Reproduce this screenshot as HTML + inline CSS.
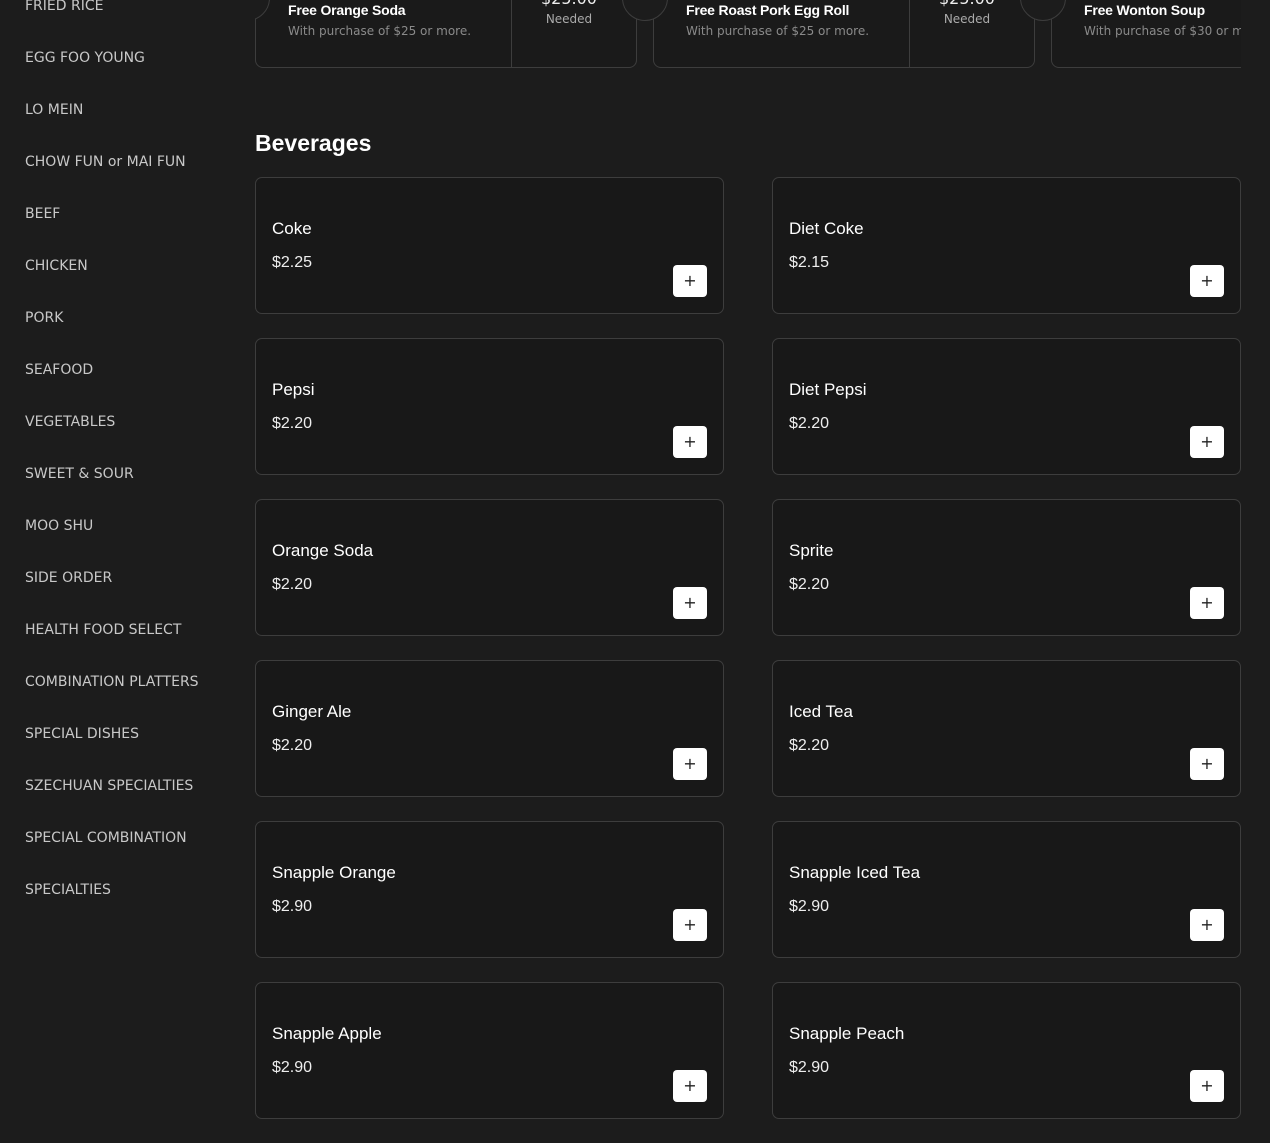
<!DOCTYPE html>
<html><head><meta charset="utf-8"><style>
*{box-sizing:border-box;margin:0;padding:0}
body{width:1270px;height:1143px;overflow:hidden;background:#1c1c1c;font-family:"DejaVu Sans","Liberation Sans",sans-serif;position:relative}
.nav{position:absolute;left:25px;font-size:14px;color:#c8c8c8;letter-spacing:0;line-height:16px}
.cp{position:absolute;top:-30px;height:98px;width:382px;border:1px solid #3d3d3d;border-radius:8px;background:#1a1a1a}
.cp .div{position:absolute;left:255px;top:0;bottom:0;border-left:1px solid #3d3d3d}
.cp .t{position:absolute;left:32px;top:31px;color:#fff;font:bold 14px "Liberation Sans",sans-serif;letter-spacing:-.2px}
.cp .s{position:absolute;left:32px;top:53px;color:#8a8a8a;font-size:12px}
.cp .n{position:absolute;left:250px;width:126px;text-align:center;top:41px;color:#aaa;font-size:12px}
.cp .a{position:absolute;left:250px;width:126px;text-align:center;top:18px;color:#eee;font-size:16px}
.notch{position:absolute;width:46px;height:46px;border-radius:50%;border:1px solid #3d3d3d;background:#1c1c1c;top:-25px}
.clip{position:absolute;left:0;top:0;width:1241px;height:80px;overflow:hidden}
.cover{position:absolute;left:200px;top:0;width:55px;height:80px;background:#1c1c1c}
h2{position:absolute;left:255px;top:130px;color:#fff;font:bold 23px "Liberation Sans",sans-serif}
.card{position:absolute;width:469px;height:137px;border:1px solid #3d3d3d;border-radius:7px;background:#181818}
.card .nm{position:absolute;left:16px;top:41px;color:#fff;font:17px "Liberation Sans",sans-serif}
.card .pr{position:absolute;left:16px;top:76px;color:#eee;font:16px "Liberation Sans",sans-serif}
.card .b{position:absolute;right:16px;top:87px;width:34px;height:32px;background:#fff;border-radius:4px;color:#222;font-size:16px;text-align:center;line-height:31px}
</style></head><body>
<div class="nav" style="top:-2px">FRIED RICE</div>
<div class="nav" style="top:50px">EGG FOO YOUNG</div>
<div class="nav" style="top:102px">LO MEIN</div>
<div class="nav" style="top:154px">CHOW FUN or MAI FUN</div>
<div class="nav" style="top:206px">BEEF</div>
<div class="nav" style="top:258px">CHICKEN</div>
<div class="nav" style="top:310px">PORK</div>
<div class="nav" style="top:362px">SEAFOOD</div>
<div class="nav" style="top:414px">VEGETABLES</div>
<div class="nav" style="top:466px">SWEET &amp; SOUR</div>
<div class="nav" style="top:518px">MOO SHU</div>
<div class="nav" style="top:570px">SIDE ORDER</div>
<div class="nav" style="top:622px">HEALTH FOOD SELECT</div>
<div class="nav" style="top:674px">COMBINATION PLATTERS</div>
<div class="nav" style="top:726px">SPECIAL DISHES</div>
<div class="nav" style="top:778px">SZECHUAN SPECIALTIES</div>
<div class="nav" style="top:830px">SPECIAL COMBINATION</div>
<div class="nav" style="top:882px">SPECIALTIES</div>

<div class="clip">
<div class="cp" style="left:255px"><div class="div"></div><div class="t">Free Orange Soda</div><div class="s">With purchase of $25 or more.</div><div class="a">$25.00</div><div class="n">Needed</div></div>
<div class="cp" style="left:653px"><div class="div"></div><div class="t">Free Roast Pork Egg Roll</div><div class="s">With purchase of $25 or more.</div><div class="a">$25.00</div><div class="n">Needed</div></div>
<div class="cp" style="left:1051px"><div class="div"></div><div class="t">Free Wonton Soup</div><div class="s">With purchase of $30 or more.</div><div class="a">$30.00</div><div class="n">Needed</div></div>
<div class="notch" style="left:224px"></div>
<div class="notch" style="left:622px"></div>
<div class="notch" style="left:1020px"></div>
<div class="cover"></div>
</div>

<h2>Beverages</h2>
<div class="card" style="left:255px;top:177px"><div class="nm">Coke</div><div class="pr">$2.25</div><div class="b">+</div></div>
<div class="card" style="left:772px;top:177px"><div class="nm">Diet Coke</div><div class="pr">$2.15</div><div class="b">+</div></div>
<div class="card" style="left:255px;top:338px"><div class="nm">Pepsi</div><div class="pr">$2.20</div><div class="b">+</div></div>
<div class="card" style="left:772px;top:338px"><div class="nm">Diet Pepsi</div><div class="pr">$2.20</div><div class="b">+</div></div>
<div class="card" style="left:255px;top:499px"><div class="nm">Orange Soda</div><div class="pr">$2.20</div><div class="b">+</div></div>
<div class="card" style="left:772px;top:499px"><div class="nm">Sprite</div><div class="pr">$2.20</div><div class="b">+</div></div>
<div class="card" style="left:255px;top:660px"><div class="nm">Ginger Ale</div><div class="pr">$2.20</div><div class="b">+</div></div>
<div class="card" style="left:772px;top:660px"><div class="nm">Iced Tea</div><div class="pr">$2.20</div><div class="b">+</div></div>
<div class="card" style="left:255px;top:821px"><div class="nm">Snapple Orange</div><div class="pr">$2.90</div><div class="b">+</div></div>
<div class="card" style="left:772px;top:821px"><div class="nm">Snapple Iced Tea</div><div class="pr">$2.90</div><div class="b">+</div></div>
<div class="card" style="left:255px;top:982px"><div class="nm">Snapple Apple</div><div class="pr">$2.90</div><div class="b">+</div></div>
<div class="card" style="left:772px;top:982px"><div class="nm">Snapple Peach</div><div class="pr">$2.90</div><div class="b">+</div></div>
</body></html>
